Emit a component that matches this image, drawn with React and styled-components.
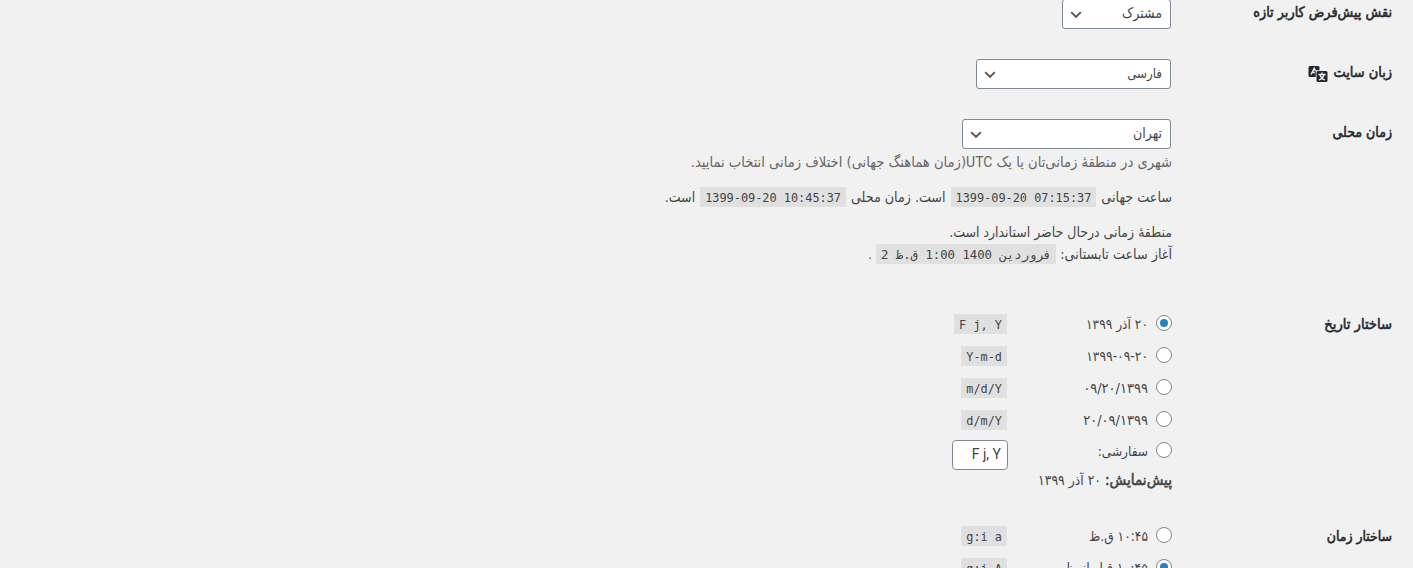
import React from "react";
import styled, { createGlobalStyle } from "styled-components";

const Global = createGlobalStyle`
  * { box-sizing: border-box; }
  html, body { margin: 0; background: #f1f1f1; overflow: hidden; }
  body { font-family: "DejaVu Sans Condensed", "DejaVu Sans", sans-serif; font-size: 13px; color: #444; }
`;

const Form = styled.main`
  direction: rtl;
  height: 568px;
  overflow: hidden;
  padding-right: 20px;
  background: #f1f1f1;
`;

const Row = styled.section`
  display: flex;
  align-items: flex-start;
  height: ${(p) => p.$height}px;
  padding-top: 15px;
  &:first-child { margin-top: -16px; }
`;

const Heading = styled.div`
  flex: 0 0 221px;
  display: flex;
  align-items: center;
  gap: 5px;
  height: 26px;
  padding: 0 1px 1px 0;
  color: #23282d;
  -webkit-text-stroke: 0.55px #23282d;
  white-space: nowrap;
  svg { margin-top: 4px; }
`;

const Field = styled.div`
  flex: 1;
  display: flex;
  flex-direction: column;
  align-items: flex-start;
  margin-top: ${(p) => (p.$options ? -3 : 0)}px;
`;

const Text = styled.span`
  font-family: "DejaVu Sans Condensed", "DejaVu Sans", sans-serif;
  font-stretch: condensed;
  font-size: ${(p) => p.$size || 14}px;
  white-space: nowrap;
`;

const Strong = styled.b`
  font-size: 15.2px;
  line-height: 1;
  font-weight: 400;
  -webkit-text-stroke: 0.55px #444;
`;

const Latin = styled.span`
  font: 14px/1 Roboto, sans-serif;
`;

const Line = styled.div`
  display: flex;
  align-items: center;
  gap: ${(p) => p.$gap || 5}px;
  height: 22px;
  margin-top: ${(p) => p.$top || 0}px;
  color: ${(p) => (p.$muted ? "#666" : "#444")};
  white-space: nowrap;
`;

const SelectBox = styled.div`
  display: flex;
  align-items: center;
  justify-content: space-between;
  width: ${(p) => p.$width}px;
  height: 30px;
  margin-right: 1px;
  padding: 0 8px 2px 7px;
  border: 1px solid #7e8993;
  border-radius: 3px;
  background: #fff;
  color: #444;
  svg { margin-top: 3px; }
`;

const Code = styled.code`
  direction: ${(p) => (p.$rtl ? "rtl" : "ltr")};
  flex: none;
  height: 20px;
  padding: 0 5px;
  background: #e0e0e0;
  font: ${(p) => (p.$rtl ? 12.3 : 11.88)}px/22px "DejaVu Sans Mono", monospace;
  white-space: pre;
`;

const Option = styled.label`
  display: flex;
  align-items: center;
  height: ${(p) => p.$height || 32}px;
`;

const Radio = styled.span`
  display: flex;
  align-items: center;
  justify-content: center;
  width: 16px;
  height: 16px;
  margin: 0 0 2px 8px;
  border: 1px solid #7e8993;
  border-radius: 50%;
  background: #fff;
  &::before {
    content: "";
    width: 8px;
    height: 8px;
    border-radius: 50%;
    background: ${(p) => (p.$checked ? "#2585c2" : "transparent")};
  }
`;

const OptionText = styled.span`
  width: 141px;
  display: flex;
`;

const Custom = styled.span`
  direction: ltr;
  display: flex;
  align-items: center;
  justify-content: flex-end;
  width: 56px;
  height: 30px;
  margin: 8px -1px 0 0;
  padding: 0 6px 3px;
  border: 1px solid #7e8993;
  border-radius: 4px;
  background: #fff;
  color: #444;
  font: 14px Roboto, sans-serif;
`;

const Select = ({ width, size, children }) => (
  <SelectBox $width={width}>
    <Text $size={size}>{children}</Text>
    <svg width="12" height="8" viewBox="0 0 12 8" fill="none" stroke="#555" strokeWidth="1.9">
      <path d="M1.2 1.2 6 6 10.8 1.2" />
    </svg>
  </SelectBox>
);

const Choice = ({ checked, size, ltr, code, children }) => (
  <Option>
    <Radio $checked={checked} />
    <OptionText><Text $size={size} dir={ltr ? "ltr" : "rtl"}>{children}</Text></OptionText>
    <Code>{code}</Code>
  </Option>
);

const LanguageIcon = () => (
  <svg width="20" height="18" viewBox="0 0 20 18">
    <path fill="#23282d" d="M2 1h8a1.5 1.5 0 0 1 1.5 1.5V5.2H9a1.3 1.3 0 0 0-1.3 1.3V12H2A1.5 1.5 0 0 1 .5 10.5v-8A1.5 1.5 0 0 1 2 1Z" />
    <path d="M3 9.5 6.2 3.4 7.5 6M4.2 7.4h2.6" fill="none" stroke="#f1f1f1" strokeWidth="1.5" />
    <rect x="8.5" y="6" width="11" height="11" rx="1.5" fill="#23282d" />
    <path d="M14 7.5v2M10.5 9.5h7M12 10c.7 2.3 2.2 4 5 5M16 10c-.7 2.3-2.2 4-5 5" fill="none" stroke="#f1f1f1" strokeWidth="1.3" />
  </svg>
);

export default function App() {
  return (
    <>
      <Global />
      <Form>
        <Row $height={60}>
          <Heading><Text $size={14.3}>نقش پیش‌فرض کاربر تازه</Text></Heading>
          <Field><Select width={109} size={14}>مشترک</Select></Field>
        </Row>
        <Row $height={60}>
          <Heading><Text $size={14.4}>زبان سایت</Text><LanguageIcon /></Heading>
          <Field><Select width={195} size={13.2}>فارسی</Select></Field>
        </Row>
        <Row $height={192}>
          <Heading><Text $size={14}>زمان محلی</Text></Heading>
          <Field>
            <Select width={209} size={14}>تهران</Select>
            <Line $top={1} $muted><Text $size={14.6}>شهری در منطقهٔ زمانی‌تان یا یک <Latin>UTC</Latin>(زمان هماهنگ جهانی) اختلاف زمانی انتخاب نمایید.</Text></Line>
            <Line $top={14}>
              <Text $size={14.2}>ساعت جهانی</Text><Code>1399-09-20 07:15:37</Code>
              <Text $size={14.1}>است. زمان محلی</Text><Code>1399-09-20 10:45:37</Code>
              <Text>است.</Text>
            </Line>
            <Line $top={13}><Text $size={13.95}>منطقهٔ زمانی درحال حاضر استاندارد است.</Text></Line>
            <Line $gap={4}>
              <Text $size={14.2}>آغاز ساعت تابستانی:</Text>
              <Code $rtl>فروردین 1400 1:00 ق.ظ 2</Code>
              <Text $size={13}>.</Text>
            </Line>
          </Field>
        </Row>
        <Row $height={212}>
          <Heading><Text $size={14.6}>ساختار تاریخ</Text></Heading>
          <Field $options>
            <Choice checked code="F j, Y" size={13.6}>۲۰ آذر ۱۳۹۹</Choice>
            <Choice ltr code="Y-m-d" size={13.7}>۱۳۹۹-۰۹-۲۰</Choice>
            <Choice ltr code="m/d/Y" size={14.5}>۰۹/۲۰/۱۳۹۹</Choice>
            <Choice ltr code="d/m/Y" size={14.5}>۲۰/۰۹/۱۳۹۹</Choice>
            <Option $height={30}>
              <Radio /><OptionText><Text $size={13.5}>سفارشی:</Text></OptionText><Custom>F j, Y</Custom>
            </Option>
            <Line $top={3}><Text $size={13.8}><Strong>پیش‌نمایش:</Strong> ۲۰ آذر ۱۳۹۹</Text></Line>
          </Field>
        </Row>
        <Row $height={100}>
          <Heading><Text $size={13.9}>ساختار زمان</Text></Heading>
          <Field $options>
            <Choice code="g:i a" size={13.6}>۱۰:۴۵ ق.ظ</Choice>
            <Choice checked code="g:i A" size={13.9}>۱۰:۴۵ قبل از ظهر</Choice>
          </Field>
        </Row>
      </Form>
    </>
  );
}
